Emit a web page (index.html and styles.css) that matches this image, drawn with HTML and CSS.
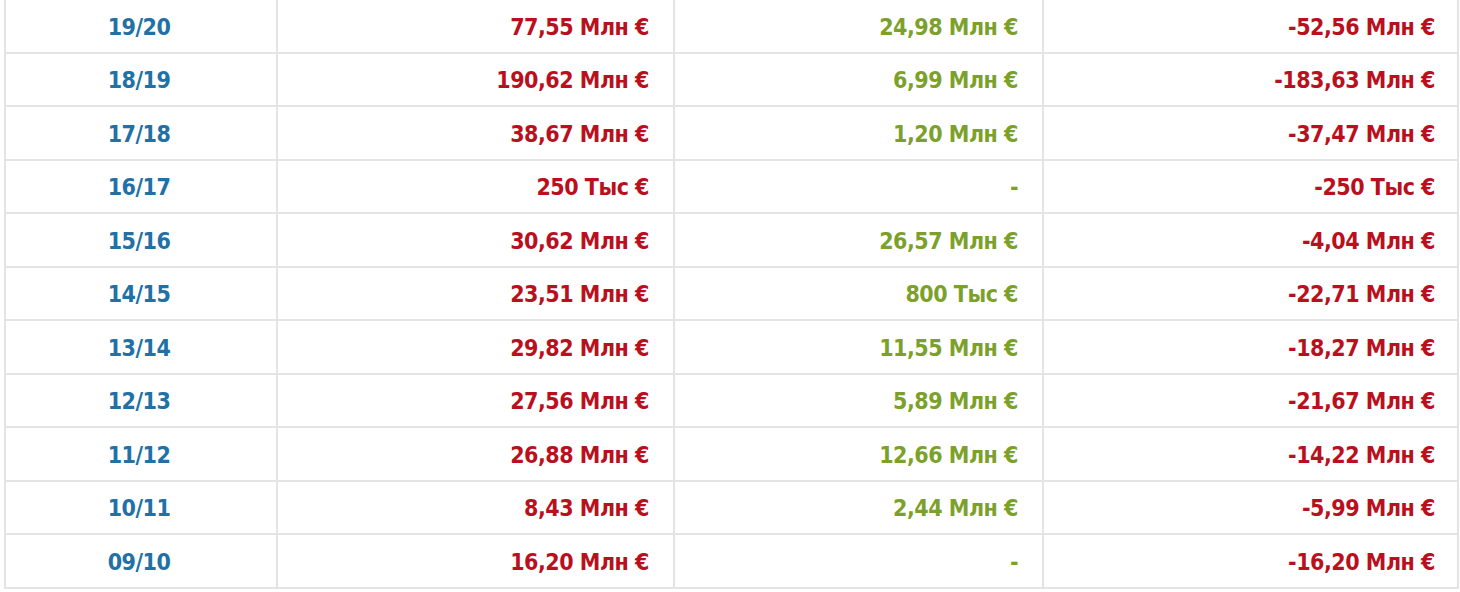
FILE: index.html
```html
<!DOCTYPE html>
<html lang="ru">
<head>
<meta charset="utf-8">
<link rel="stylesheet" href="styles.css">
</head>
<body>
<div class="wrap">
<table class="balance">
<colgroup><col class="c1"><col class="c2"><col class="c3"><col class="c4"></colgroup>
<tbody>
<tr><td class="season">19/20</td><td class="neg">77,55 Млн €</td><td class="pos">24,98 Млн €</td><td class="neg last">-52,56 Млн €</td></tr>
<tr><td class="season">18/19</td><td class="neg">190,62 Млн €</td><td class="pos">6,99 Млн €</td><td class="neg last">-183,63 Млн €</td></tr>
<tr><td class="season">17/18</td><td class="neg">38,67 Млн €</td><td class="pos">1,20 Млн €</td><td class="neg last">-37,47 Млн €</td></tr>
<tr><td class="season">16/17</td><td class="neg">250 Тыс €</td><td class="pos">-</td><td class="neg last">-250 Тыс €</td></tr>
<tr><td class="season">15/16</td><td class="neg">30,62 Млн €</td><td class="pos">26,57 Млн €</td><td class="neg last">-4,04 Млн €</td></tr>
<tr><td class="season">14/15</td><td class="neg">23,51 Млн €</td><td class="pos">800 Тыс €</td><td class="neg last">-22,71 Млн €</td></tr>
<tr><td class="season">13/14</td><td class="neg">29,82 Млн €</td><td class="pos">11,55 Млн €</td><td class="neg last">-18,27 Млн €</td></tr>
<tr><td class="season">12/13</td><td class="neg">27,56 Млн €</td><td class="pos">5,89 Млн €</td><td class="neg last">-21,67 Млн €</td></tr>
<tr><td class="season">11/12</td><td class="neg">26,88 Млн €</td><td class="pos">12,66 Млн €</td><td class="neg last">-14,22 Млн €</td></tr>
<tr><td class="season">10/11</td><td class="neg">8,43 Млн €</td><td class="pos">2,44 Млн €</td><td class="neg last">-5,99 Млн €</td></tr>
<tr><td class="season">09/10</td><td class="neg">16,20 Млн €</td><td class="pos">-</td><td class="neg last">-16,20 Млн €</td></tr>
</tbody>
</table>
</div>
</body>
</html>
```

FILE: styles.css
```css
html, body {
  margin: 0;
  padding: 0;
  background: #ffffff;
}
.wrap {
  padding: 0 3px 0 4px;
  margin-top: -2px;
}
.balance {
  width: 1453px;
  border-collapse: collapse;
  table-layout: fixed;
  font-family: "DejaVu Sans Condensed", "DejaVu Sans", sans-serif;
  font-stretch: condensed;
  font-weight: bold;
  font-size: 23px;
  letter-spacing: -0.5px;
  line-height: 26px;
}
.c1 { width: 272px; }
.c2 { width: 397px; }
.c3 { width: 369px; }
.c4 { width: 415px; }
.balance td {
  border: 2px solid #e4e4e4;
  height: 49.5px;
  padding: 2px 24px 0 0;
  text-align: right;
  white-space: nowrap;
}
.balance td.last {
  padding-right: 22px;
}
.balance td.season {
  text-align: center;
  padding: 2px 4px 0 0;
  color: #2170a6;
}
.neg { color: #ba101d; }
.pos { color: #7ca12b; }
```
